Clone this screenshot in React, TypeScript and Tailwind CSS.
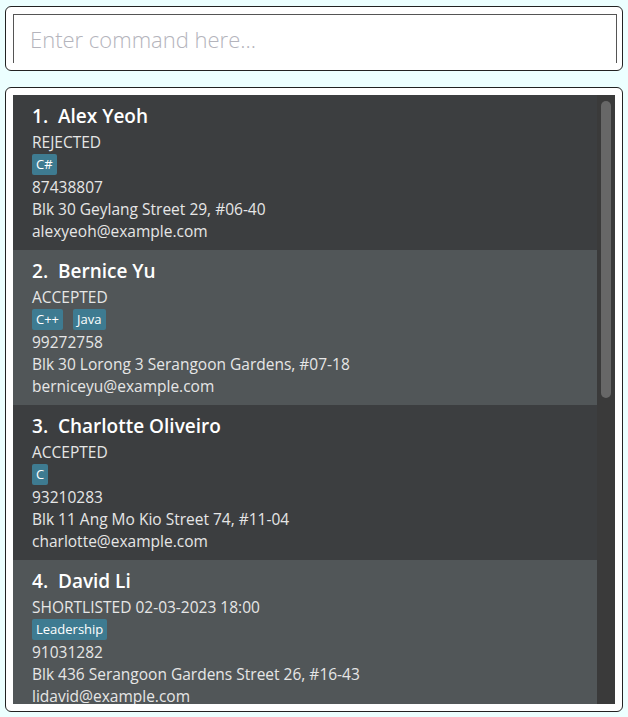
import React from 'react';

type Person = {
  name: string;
  status: string;
  tags: string[];
  phone: string;
  address: string;
  email: string;
};

const people: Person[] = [
  {
    name: 'Alex Yeoh',
    status: 'REJECTED',
    tags: ['C#'],
    phone: '87438807',
    address: 'Blk 30 Geylang Street 29, #06-40',
    email: 'alexyeoh@example.com',
  },
  {
    name: 'Bernice Yu',
    status: 'ACCEPTED',
    tags: ['C++', 'Java'],
    phone: '99272758',
    address: 'Blk 30 Lorong 3 Serangoon Gardens, #07-18',
    email: 'berniceyu@example.com',
  },
  {
    name: 'Charlotte Oliveiro',
    status: 'ACCEPTED',
    tags: ['C'],
    phone: '93210283',
    address: 'Blk 11 Ang Mo Kio Street 74, #11-04',
    email: 'charlotte@example.com',
  },
  {
    name: 'David Li',
    status: 'SHORTLISTED 02-03-2023 18:00',
    tags: ['Leadership'],
    phone: '91031282',
    address: 'Blk 436 Serangoon Gardens Street 26, #16-43',
    email: 'lidavid@example.com',
  },
];

const PersonCard = ({ person, index }: { person: Person; index: number }) => (
  <div
    className={`h-[155px] shrink-0 pl-[19px] pt-[10px] text-[15.5px] leading-[22px] text-[#e6e6e6] ${
      index % 2 === 0 ? 'bg-[#3c3e40]' : 'bg-[#515658]'
    }`}
  >
    <div className="h-[26px] text-[19px] font-semibold leading-[23px] text-white">
      {index + 1}.&nbsp;&nbsp;{person.name}
    </div>
    <div>{person.status}</div>
    <div className="flex h-[23px] items-center gap-[10px]">
      {person.tags.map((t) => (
        <span key={t} className="rounded-[2px] bg-[#3e7b91] px-[4px] text-[13px] leading-[21px] text-white">
          {t}
        </span>
      ))}
    </div>
    <div>{person.phone}</div>
    <div>{person.address}</div>
    <div>{person.email}</div>
  </div>
);

export default function App() {
  return (
    <div
      className="flex h-[717px] w-[628px] flex-col gap-[16px] bg-[#ecffff] px-[5px] pb-[5px] pt-[6px]"
      style={{ fontFamily: '"Open Sans", "Noto Sans", sans-serif' }}
    >
      <div className="h-[65px] shrink-0 rounded-[6px] border border-[#222] bg-white pl-[7px] pr-[5px] pt-[7px]">
        <div className="flex h-[49px] items-center border-x border-t border-[#555] pl-[16px]">
          <span className="text-[22px] font-light text-[#b4b4bc]">Enter command here...</span>
        </div>
      </div>

      <div className="flex min-h-0 flex-1 flex-col rounded-[6px] border border-[#222] bg-white p-[7px]">
        <div className="flex min-h-0 flex-1 overflow-hidden bg-[#3a3a3a]">
          <div className="flex min-w-0 flex-1 flex-col overflow-hidden">
            {people.map((p, i) => (
              <PersonCard key={p.name} person={p} index={i} />
            ))}
          </div>
          <div className="w-[18px] shrink-0 bg-[#3a3a3a] px-[4px] pt-[6px]">
            <div className="h-[297px] rounded-[6px] bg-[#676767]" />
          </div>
        </div>
      </div>
    </div>
  );
}
